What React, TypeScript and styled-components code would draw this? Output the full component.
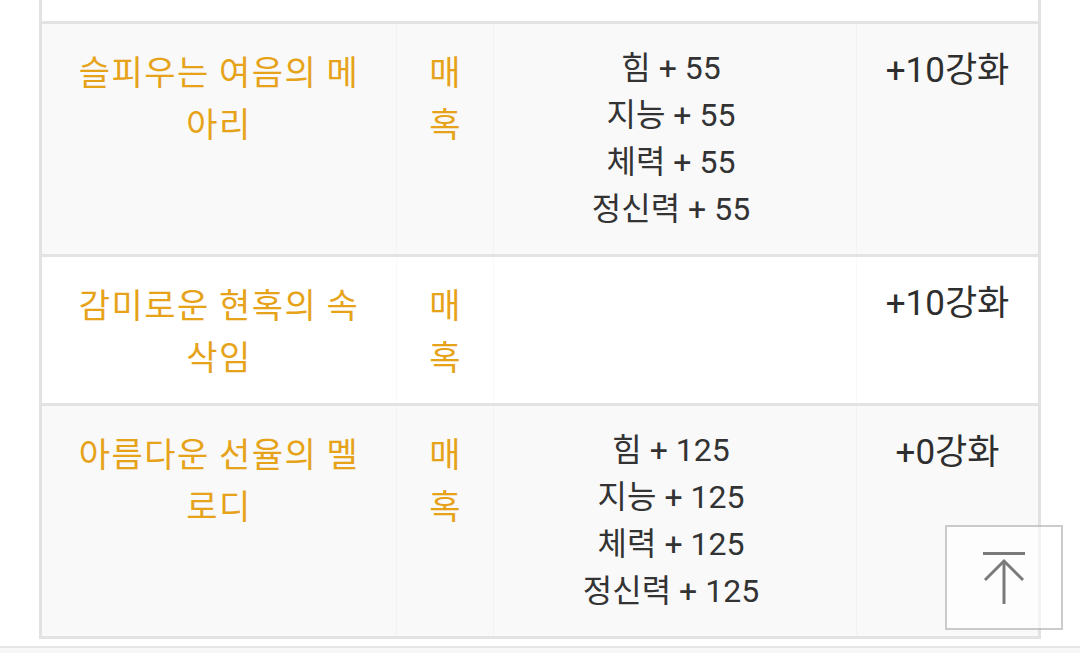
import React from "react";
import styled, { createGlobalStyle } from "styled-components";

const GlobalStyle = createGlobalStyle`
  html, body {
    margin: 0;
    padding: 0;
    background: #ffffff;
    overflow: hidden;
  }
  body {
    font-family: Roboto, "Noto Sans CJK KR", sans-serif;
  }
`;

const Page = styled.div`
  width: 1080px;
  height: 653px;
  display: flex;
  flex-direction: column;
`;

const Table = styled.div`
  margin-left: 39px;
  width: 1002px;
  box-sizing: border-box;
  border-left: 3px solid #e2e2e2;
  border-right: 3px solid #e2e2e2;
  display: flex;
  flex-direction: column;
`;

const Row = styled.div<{ $shade?: boolean }>`
  display: grid;
  grid-template-columns: 354px 97px 363px 182px;
  background: ${(p) => (p.$shade ? "#f9f9f9" : "#ffffff")};
  border-bottom: 3px solid #e3e3e3;
`;

const PartialRow = styled.div`
  height: 21px;
  background: #ffffff;
  border-bottom: 3px solid #e3e3e3;
`;

const Cell = styled.div<{ $divider?: boolean }>`
  box-sizing: border-box;
  padding: 21px 0;
  text-align: center;
  border-left: ${(p) => (p.$divider ? "1px solid rgba(0, 0, 0, 0.025)" : "none")};
`;

const NameCell = styled(Cell)`
  padding-left: 30px;
  padding-right: 30px;
  font-family: "Noto Sans CJK KR", sans-serif;
  font-size: 34px;
  letter-spacing: 1.5px;
  line-height: 52px;
  color: #e6a31a;
`;

const TypeCell = styled(Cell)`
  padding-left: 24px;
  padding-right: 24px;
  font-family: "Noto Sans CJK KR", sans-serif;
  font-size: 34px;
  line-height: 52px;
  color: #e6a31a;
`;

const StatsCell = styled(Cell)`
  font-family: Roboto, "Noto Sans CJK KR", sans-serif;
  font-size: 32px;
  line-height: 47px;
  color: #333333;
  white-space: nowrap;
  padding-right: 8px;
`;

const StatLine = styled.div``;

const EnhanceCell = styled(Cell)`
  font-family: Roboto, "Noto Sans CJK KR", sans-serif;
  font-size: 35px;
  line-height: 52px;
  color: #2e2e2e;
  white-space: nowrap;
`;

const Footer = styled.div`
  margin-top: 7px;
  flex: 1;
  border-top: 2px solid #e6e6e6;
  background: #f7f7f7;
`;

const TopButton = styled.button`
  position: fixed;
  right: 17px;
  bottom: 23px;
  width: 118px;
  height: 105px;
  box-sizing: border-box;
  padding: 0;
  border: 2px solid rgba(0, 0, 0, 0.2);
  background: rgba(255, 255, 255, 0.6);
  display: flex;
  align-items: center;
  justify-content: center;
  cursor: pointer;
`;

type Item = {
  name: string;
  type: string;
  stats: string[];
  enhance: string;
};

const items: Item[] = [
  {
    name: "슬피우는 여음의 메아리",
    type: "매혹",
    stats: ["힘 + 55", "지능 + 55", "체력 + 55", "정신력 + 55"],
    enhance: "+10강화",
  },
  {
    name: "감미로운 현혹의 속삭임",
    type: "매혹",
    stats: [],
    enhance: "+10강화",
  },
  {
    name: "아름다운 선율의 멜로디",
    type: "매혹",
    stats: ["힘 + 125", "지능 + 125", "체력 + 125", "정신력 + 125"],
    enhance: "+0강화",
  },
];

function ArrowUpIcon() {
  return (
    <svg width="46" height="54" viewBox="0 0 46 54" fill="none">
      <line x1="2" y1="2.5" x2="44" y2="2.5" stroke="#7a7a7a" strokeWidth="3" />
      <line x1="23" y1="11" x2="23" y2="53" stroke="#7a7a7a" strokeWidth="3" />
      <polyline
        points="4,29 23,10 42,29"
        stroke="#7a7a7a"
        strokeWidth="3"
        fill="none"
      />
    </svg>
  );
}

export default function App() {
  return (
    <Page>
      <GlobalStyle />
      <Table>
        <PartialRow />
        {items.map((it, i) => (
          <Row key={i} $shade={i % 2 === 0}>
            <NameCell>{it.name}</NameCell>
            <TypeCell $divider>{it.type}</TypeCell>
            <StatsCell $divider>
              {it.stats.map((s) => (
                <StatLine key={s}>{s}</StatLine>
              ))}
            </StatsCell>
            <EnhanceCell $divider>{it.enhance}</EnhanceCell>
          </Row>
        ))}
      </Table>
      <Footer />
      <TopButton aria-label="맨 위로">
        <ArrowUpIcon />
      </TopButton>
    </Page>
  );
}
